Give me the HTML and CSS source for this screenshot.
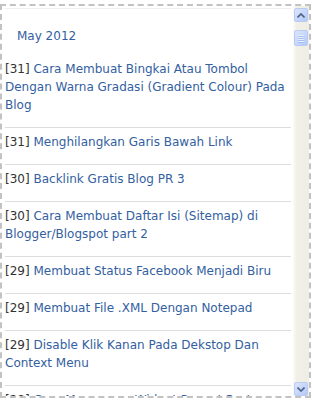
FILE: index.html
```html
<!DOCTYPE html>
<html lang="id">

<head>
    <meta charset="UTF-8">
    <meta name="viewport" content="width=device-width, initial-scale=1.0">
    <title>Arsip Blog</title>
    <link rel="stylesheet" href="styles.css">
</head>

<body>
    <div class="archive">
        <div class="posts">
            <div class="list">
                <h2 class="month"><a href="#">May 2012</a></h2>
                <ul>
                    <li>[31] <a href="#">Cara Membuat Bingkai Atau Tombol Dengan Warna Gradasi (Gradient Colour) Pada Blog</a></li>
                    <li>[31] <a href="#">Menghilangkan Garis Bawah Link</a></li>
                    <li>[30] <a href="#">Backlink Gratis Blog PR 3</a></li>
                    <li>[30] <a href="#">Cara Membuat Daftar Isi (Sitemap) di Blogger/Blogspot part 2</a></li>
                    <li>[29] <a href="#">Membuat Status Facebook Menjadi Biru</a></li>
                    <li>[29] <a href="#">Membuat File .XML Dengan Notepad</a></li>
                    <li>[29] <a href="#">Disable Klik Kanan Pada Dekstop Dan Context Menu</a></li>
                    <li>[28] <a href="#">Cara Memasang Widget Recent Post</a></li>
                </ul>
            </div>
        </div>

        <!-- fake xp scrollbar -->
        <div class="scrollbar">
            <div class="sb-btn">
                <svg width="8" height="5" viewBox="0 0 8 5"><path d="M0.5 4.5 L4 1 L7.5 4.5" fill="none" stroke="#4d6185" stroke-width="1.6"/></svg>
            </div>
            <div class="sb-thumb">
                <span></span><span></span><span></span><span></span>
            </div>
            <div class="sb-btn sb-down">
                <svg width="8" height="5" viewBox="0 0 8 5"><path d="M0.5 0.5 L4 4 L7.5 0.5" fill="none" stroke="#4d6185" stroke-width="1.6"/></svg>
            </div>
        </div>
    </div>
</body>

</html>
```

FILE: styles.css
```css
* {
    box-sizing: border-box;
}

body {
    margin: 0;
    background-color: #fff;
    font-family: "DejaVu Sans", Verdana, sans-serif;
    font-size: 12px;
    color: #333;
}

a {
    color: #33609f;
    text-decoration: none;
}

.archive {
    width: 311px;
    height: 394px;
    margin-top: 4px;
    border: 2px dashed #c2c2c2;
    display: flex;
}

.posts {
    flex: 1;
    overflow: hidden;
    padding: 2px 2px 0 3px;
}

.list {
    border-top: 1px solid #eee;
}

.month {
    margin: 18px 0 0 12px;
    font-size: 12px;
    font-weight: normal;
    line-height: 18px;
}

ul {
    list-style: none;
    margin: 10px 0 0 0;
    padding: 0;
}

li {
    line-height: 18px;
    padding: 5px 0 13px 0;
    border-bottom: 1px solid #ddd;
}

/* scrollbar column */
.scrollbar {
    width: 16px;
    padding-top: 2px;
    background: linear-gradient(to right, #fbfbf8, #f1efe6 4px, #efeee6);
    display: flex;
    flex-direction: column;
    align-items: center;
}

.sb-btn,
.sb-thumb {
    width: 14px;
    border: 1px solid #b9cbf3;
    border-radius: 2px;
    background: linear-gradient(to bottom right, #dbe5fd, #c4d4fb 60%, #b5c9f6);
    display: flex;
    align-items: center;
    justify-content: center;
}

.sb-btn {
    height: 14px;
}

.sb-down {
    margin-top: auto;
}

.sb-thumb {
    height: 16px;
    margin-top: 8px;
    flex-direction: column;
    gap: 1px;
}

.sb-thumb span {
    display: block;
    width: 6px;
    height: 1px;
    background-color: #e6edfd;
    box-shadow: 0 1px 0 #a8bdf0;
}
```
